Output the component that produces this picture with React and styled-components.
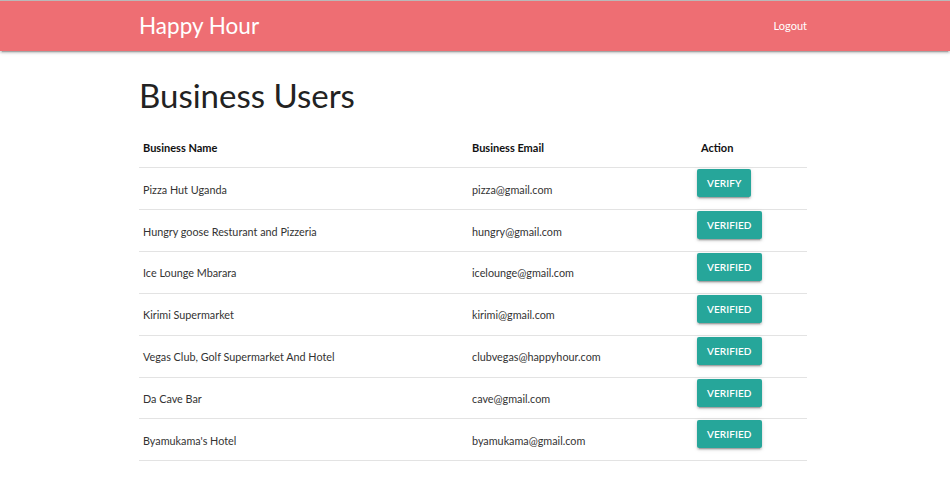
import React from "react";
import styled, { createGlobalStyle } from "styled-components";

const GlobalStyle = createGlobalStyle`
  body {
    margin: 0;
    background: #fff;
    font-family: Lato, "Liberation Sans", sans-serif;
    color: rgba(0, 0, 0, 0.87);
  }
`;

const Nav = styled.nav`
  height: 50px;
  background-color: #ee6e73;
  border-top: 1px solid #b9b9b9;
  box-shadow: 0 2px 2px 0 rgba(0, 0, 0, 0.14), 0 1px 5px 0 rgba(0, 0, 0, 0.12),
    0 3px 1px -2px rgba(0, 0, 0, 0.2);
`;

const Container = styled.div`
  width: 668px;
  margin: 0 auto 0 calc(50% - 336px);
`;

const NavInner = styled(Container)`
  height: 100%;
  display: flex;
  align-items: center;
  justify-content: space-between;
`;

const Brand = styled.a`
  color: #fff;
  font-size: 22.5px;
  padding-bottom: 2px;
`;

const NavLink = styled.a`
  color: #fff;
  font-size: 11px;
  padding-bottom: 1px;
`;

const Title = styled.h3`
  margin: 26px 0 14px;
  font-size: 33px;
  font-weight: 400;
  line-height: 1.1;
  color: #222;
`;

const Row = styled.div`
  display: grid;
  grid-template-columns: 329px 229px 1fr;
  height: ${(p) => (p.head ? "40px" : "40.86px")};
  border-bottom: 1px solid #e3e3e3;
`;

const Cell = styled.div`
  padding: 0 4px;
  display: flex;
  align-items: center;
  font-size: ${(p) => (p.head ? "11px" : "10.8px")};
  font-weight: ${(p) => (p.head ? 700 : 400)};
  color: ${(p) => (p.head ? "#111" : "#333")};
  padding-top: ${(p) => (p.head ? "0" : "1px")};
`;

const ActionCell = styled.div`
  padding: 1px 0 0 0;
  display: flex;
  align-items: flex-start;
  font-size: 11px;
  font-weight: 700;
  color: #111;
  ${(p) => p.head && "align-items: center; padding: 0 4px;"}
`;

const Button = styled.button`
  height: 28px;
  padding: 0 10px;
  border: none;
  border-radius: 2px;
  background-color: #26a69a;
  color: #fff;
  font-family: inherit;
  font-size: 10px;
  font-weight: 600;
  letter-spacing: 0.1px;
  text-transform: uppercase;
  box-shadow: 0 2px 2px 0 rgba(0, 0, 0, 0.14), 0 1px 5px 0 rgba(0, 0, 0, 0.12),
    0 3px 1px -2px rgba(0, 0, 0, 0.2);
  cursor: pointer;
`;

const businesses = [
  { name: "Pizza Hut Uganda", email: "pizza@gmail.com", verified: false },
  { name: "Hungry goose Resturant and Pizzeria", email: "hungry@gmail.com", verified: true },
  { name: "Ice Lounge Mbarara", email: "icelounge@gmail.com", verified: true },
  { name: "Kirimi Supermarket", email: "kirimi@gmail.com", verified: true },
  { name: "Vegas Club, Golf Supermarket And Hotel", email: "clubvegas@happyhour.com", verified: true },
  { name: "Da Cave Bar", email: "cave@gmail.com", verified: true },
  { name: "Byamukama's Hotel", email: "byamukama@gmail.com", verified: true },
];

const App = () => {
  return (
    <>
      <GlobalStyle />
      <Nav>
        <NavInner>
          <Brand>Happy Hour</Brand>
          <NavLink>Logout</NavLink>
        </NavInner>
      </Nav>
      <Container>
        <Title>Business Users</Title>
        <Row head>
          <Cell head>Business Name</Cell>
          <Cell head>Business Email</Cell>
          <ActionCell head>Action</ActionCell>
        </Row>
        {businesses.map((b) => (
          <Row key={b.email}>
            <Cell>{b.name}</Cell>
            <Cell>{b.email}</Cell>
            <ActionCell>
              <Button type="button">{b.verified ? "Verified" : "Verify"}</Button>
            </ActionCell>
          </Row>
        ))}
      </Container>
    </>
  );
};

export default App;
